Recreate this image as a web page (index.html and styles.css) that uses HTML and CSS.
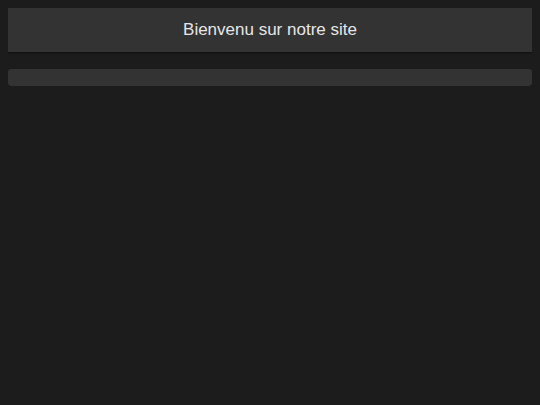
FILE: index.html
```html
<!DOCTYPE html>
<html lang="fr">
<head>
<meta charset="utf-8">
<title>Bienvenue</title>
<link rel="stylesheet" href="styles.css">
</head>
<body>
<header class="site-header">Bienvenu sur notre site</header>
<main class="content"></main>
</body>
</html>
```
FILE: styles.css
```css
html, body {
  background: #1c1c1c;
}
body {
  margin: 8px;
  font-family: "Liberation Sans", Arial, sans-serif;
  color: #e6e6e6;
}
.site-header {
  height: 44px;
  box-sizing: border-box;
  background: #333333;
  box-shadow: 0 1px 2px rgba(0,0,0,0.5);
  display: flex;
  align-items: center;
  justify-content: center;
  font-size: 17px;
  margin-bottom: 17px;
}
.content {
  display: block;
  height: 17px;
  background: #333333;
  border-radius: 3px;
  box-shadow: 0 1px 2px rgba(0,0,0,0.4);
}
```
